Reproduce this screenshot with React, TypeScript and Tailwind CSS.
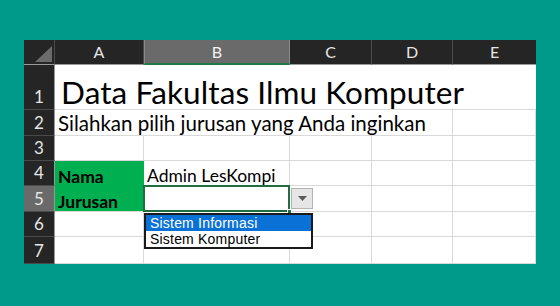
import React from 'react';

const font = { fontFamily: 'Lato, "Noto Sans", sans-serif' };

function ColHead({ label, selected = false, last = false }: { label: string; selected?: boolean; last?: boolean }) {
  if (selected) {
    return (
      <div className="flex items-center justify-center bg-[#6a6a6a] border-x border-[#8a8a8a] border-b-2 border-b-[#1f7a45] text-[16px] text-[#f2f2f2]">
        {label}
      </div>
    );
  }
  return (
    <div className={`flex items-center justify-center bg-[#252525] text-[16px] text-[#e6e6e6] ${last ? '' : 'border-r border-[#4a4a4a]'} border-b border-b-[#9a9a9a]`}>
      {label}
    </div>
  );
}

function RowHead({ n, selected = false }: { n: number; selected?: boolean }) {
  return (
    <div className={`flex items-end justify-center pb-[2px] text-[17px] leading-[20px] text-[#e6e6e6] border-b border-[#4a4a4a] border-r border-r-[#9a9a9a] ${selected ? 'bg-[#6a6a6a]' : 'bg-[#252525]'}`}>
      {n}
    </div>
  );
}

function Cell({ children, className = '' }: { children?: React.ReactNode; className?: string }) {
  return <div className={`border-r border-b border-[#d9d9d9] bg-white flex items-end ${className}`}>{children}</div>;
}

export default function App() {
  return (
    <div className="w-[560px] h-[306px] bg-[#009a8a] pt-[40px] pl-[24px] overflow-hidden" style={font}>
      <div className="relative w-[512px]">
        <div className="grid grid-cols-[31px_89px_146px_82px_81px_83px] grid-rows-[25px_45px_26px_25px_25px_26px_25px_27px] bg-white">
          {/* header row */}
          <div className="relative bg-[#252525] border-r border-[#4a4a4a] border-b border-b-[#9a9a9a]">
            <svg className="absolute left-[11px] top-[6px]" width="17" height="16" viewBox="0 0 17 16">
              <polygon points="17,0 17,16 0,16" fill="#6b6b6b" />
            </svg>
          </div>
          <ColHead label="A" />
          <ColHead label="B" selected />
          <ColHead label="C" />
          <ColHead label="D" />
          <ColHead label="E" last />

          {/* row 1 */}
          <RowHead n={1} />
          <div className="col-span-5 border-b border-[#d9d9d9] flex items-end pl-[6px] pb-[1px]">
            <span className="text-[31.5px] leading-none text-black tracking-[0.1px]">Data Fakultas Ilmu Komputer</span>
          </div>

          {/* row 2 */}
          <RowHead n={2} />
          <div className="col-span-4 border-r border-b border-[#d9d9d9] flex items-end pl-[3px] pb-[2px]">
            <span className="text-[20.5px] leading-none text-black">Silahkan pilih jurusan yang Anda inginkan</span>
          </div>
          <Cell />

          {/* row 3 */}
          <RowHead n={3} />
          <Cell />
          <Cell />
          <Cell />
          <Cell />
          <Cell />

          {/* row 4 */}
          <RowHead n={4} />
          <div className="bg-[#00b050] flex items-end pl-[3px] pb-[1px]">
            <span className="text-[17.5px] font-bold text-black leading-none">Nama</span>
          </div>
          <Cell className="pl-[3px] pb-[1px]">
            <span className="text-[17.5px] leading-none text-black">Admin LesKompi</span>
          </Cell>
          <Cell />
          <Cell />
          <Cell />

          {/* row 5 */}
          <RowHead n={5} selected />
          <div className="bg-[#00b050] flex items-end pl-[3px] pb-[1px] border-b border-[#d9d9d9]">
            <span className="text-[17.5px] font-bold text-black leading-none">Jurusan</span>
          </div>
          <div className="relative border-2 border-[#1f6e43] bg-white -ml-px -mt-px">
            <div className="absolute right-[-4px] bottom-[-4px] w-[5px] h-[5px] bg-[#1f6e43] border border-white" />
          </div>
          <Cell />
          <Cell />
          <Cell />

          {/* row 6 */}
          <RowHead n={6} />
          <Cell />
          <Cell />
          <Cell />
          <Cell />
          <Cell />

          {/* row 7 */}
          <RowHead n={7} />
          <Cell />
          <Cell />
          <Cell />
          <Cell />
          <Cell />
        </div>

        {/* dropdown button */}
        <div className="absolute left-[267px] top-[148px] w-[22px] h-[21px] bg-[#e6e6e6] border border-[#b3b3b3] flex items-center justify-center">
          <svg width="9" height="5" viewBox="0 0 9 5">
            <polygon points="0,0 9,0 4.5,5" fill="#5a5a5a" />
          </svg>
        </div>

        {/* dropdown list */}
        <div className="absolute left-[120px] top-[173px] w-[169px] bg-white border-2 border-[#1a1a1a] flex flex-col" style={{ fontFamily: '"Liberation Sans", Arial, sans-serif' }}>
          <div className="bg-[#0a72d6] text-white text-[14px] leading-[16px] pl-[4px] tracking-[0.2px]">Sistem Informasi</div>
          <div className="text-black text-[14px] leading-[16px] pl-[4px] tracking-[0.2px]">Sistem Komputer</div>
        </div>
      </div>
    </div>
  );
}
